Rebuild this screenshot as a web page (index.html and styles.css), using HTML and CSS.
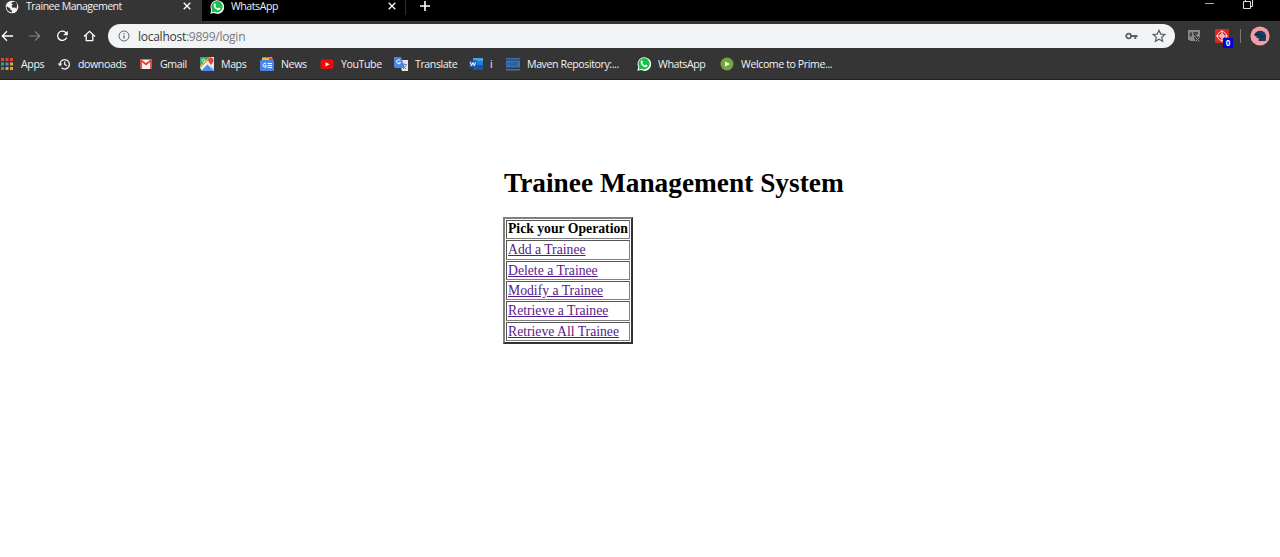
FILE: index.html
```html
<!DOCTYPE html>
<html lang="en">
<head>
<meta charset="utf-8">
<title>Trainee Management</title>
<link rel="stylesheet" href="styles.css">
</head>
<body>
<svg class="defs" width="0" height="0">
  <symbol id="whatsapp" viewBox="0 0 14 14">
    <path fill="#fff" d="M.3 13.8 1.3 10.2A6.8 6.8 0 1 1 4 13Z"/>
    <path fill="#18bf4b" d="M1.7 12.4 2.3 10A5.7 5.7 0 1 1 4.3 11.8Z"/>
    <path fill="#fff" d="M4.6 3.5c.8-.3 1 .2 1.3 1.4 0 .5-.7.8-.6 1.1.5 1.1 1.2 1.8 2.4 2.3.5.1.7-.8 1.1-.8l1.6.8c.3 1.4-1 2-2 1.9C5.7 9.8 3.600 7.100 3.700 5c0-.7.3-1.200.9-1.500Z"/>
  </symbol>
  <symbol id="close" viewBox="0 0 8 8"><path d="m.7.7 6.600 6.600m0-6.600L.7 7.300" stroke="#fff" stroke-width="1.300"/></symbol>
</svg>
<header class="browser">
  <div class="tabs">
    <div class="tab active">
      <svg class="favicon" viewBox="0 0 14 14"><circle cx="7" cy="7" r="6.300" fill="#f4f4f4"/><path fill="#353535" d="m1.500 6.300 3.800 2.200v1.600l1.700.5v2L4 11.600C2.200 10.300 1.300 8.500 1.500 6.300ZM7 2.200l3.500-.5 1.700 2.800-.7 4.300-1.300-1.200-2.700.2-1-2L8 4.500l-1.700-.9Z"/></svg>
      <span class="tab-title">Trainee Management</span>
      <svg class="close"><use href="#close"/></svg>
    </div>
    <div class="tab idle">
      <svg class="favicon"><use href="#whatsapp"/></svg>
      <span class="tab-title wa-title">WhatsApp</span>
      <svg class="close"><use href="#close"/></svg>
    </div>
    <svg class="plus" viewBox="0 0 10 10"><path d="M5 0v10M0 5h10" stroke="#fff" stroke-width="1.600"/></svg>
    <svg class="window" viewBox="0 0 50 14"><path d="M1 3.500h9" stroke="#aaa"/><path d="M39.500 1.500h7v7h-7zM41.500 1.500v-2h7v7h-2" fill="none" stroke="#ddd"/></svg>
  </div>
  <div class="toolbar">
    <svg class="nav" viewBox="0 0 98 16" fill="none" stroke="#fff" stroke-width="1.300">
      <path d="M13 8H2.500M7 3.300 2.300 8 7 12.700"/>
      <path d="M29 8h10.500M35 3.300 39.700 8 35 12.700" stroke="#858585" stroke-width="1.200"/>
      <path d="M66.300 5.200A4.700 4.700 0 1 0 66.700 9.500"/><path d="M67.800 2.700v4.600h-4.600Z" fill="#fff" stroke="none"/>
      <path d="m84 8.500 5.500-5.200L95 8.500M86.200 7v5.600h6.600V7"/>
    </svg>
    <div class="address">
      <svg class="info" viewBox="0 0 12 12" fill="none" stroke="#62666a"><circle cx="6" cy="6" r="5"/><path d="M6 5.300v3.500M6 3v1.300" stroke-width="1.200"/></svg>
      <span class="url"><b>localhost</b>:9899/login</span>
      <svg class="key" viewBox="0 0 13 8"><circle cx="3.600" cy="4" r="2.400" fill="none" stroke="#5d6165" stroke-width="1.800"/><path d="M6 4h6.500M10.300 4v3" fill="none" stroke="#5d6165" stroke-width="1.900"/></svg>
      <svg class="star" viewBox="0 0 14 14"><path fill="none" stroke="#5b5f64" stroke-width="1.200" d="m7 1.300 1.700 3.800 4.100.4-3.100 2.700.9 4.100L7 10.200l-3.600 2.100.9-4.100-3.100-2.700 4.100-.4Z"/></svg>
    </div>
    <svg class="ext" viewBox="0 0 14 14"><path fill="#8a8a8a" d="M1 1h12v6.500l-2 .8-2-1.500-2 2L8.500 12H3l-.5-1H1Z"/><path fill="#454545" d="M2.500 4 5 3v4.500H2.500zM6 3h5v2L7 7.500z"/><path d="m8.500 8.500 4 4m0-4-4 4" stroke="#999"/></svg>
    <div class="target">
      <svg viewBox="0 0 14 14"><rect width="14" height="14" rx="1" fill="#d82724"/><g fill="none" stroke="#ffd8d6"><circle cx="7" cy="7" r="4.500"/><circle cx="7" cy="7" r="2"/><path d="M7 1v12M1 7h12"/></g></svg>
      <span class="badge">0</span>
    </div>
    <span class="divider"></span>
    <svg class="avatar" viewBox="0 0 20 20"><circle cx="10" cy="10" r="9.600" fill="#f49ba3"/><path fill="#173d62" d="M4.200 9.500 5 7l3-2 4-.3 3 2 1.200 3.300-.5 5H8.500l.3-2.700-2-.3-.5-1.500Z"/><path d="m5 8.500 4.500-.3 1.500 2.200 3 .4" fill="none" stroke="#0d2643"/></svg>
  </div>
  <nav class="bookmarks">
    <a class="bm"><svg viewBox="0 0 14 14"><path fill="#e44134" d="M1 1h3v3H1zM5.500 1h3v3h-3zM10 1h3v3h-3z"/><path fill="#38a65a" d="M1 5.500h3v3H1z"/><path fill="#458bea" d="M5.500 5.500h3v3h-3z"/><path fill="#eba43b" d="M10 5.500h3v3h-3zM5.500 10h3v3h-3zM10 10h3v3h-3z"/><path fill="#38a65a" d="M1 10h3v3H1z"/></svg><span>Apps</span></a>
    <a class="bm"><svg viewBox="0 0 14 14" fill="none" stroke="#eee" stroke-width="1.300"><path d="M3 7.200a4.700 4.700 0 1 1 1.500 3.600M7.700 4.500v3l2.200 1.300"/><path fill="#eee" stroke="none" d="M.5 6.500h5L3 9.300Z"/></svg><span>downoads</span></a>
    <a class="bm"><svg viewBox="0 0 14 14"><rect x="1.500" y="2.500" width="11" height="9.500" fill="#f5f5f5"/><path fill="none" stroke="#e04438" stroke-width="1.800" d="M2 12V3.300l5 4 5-4V12"/></svg><span>Gmail</span></a>
    <a class="bm"><svg viewBox="0 0 14 14"><path fill="#35a866" d="M0 0h9L0 9Z"/><path fill="#eee" d="m0 11 11-11h3v14H2Z"/><path fill="#4b8bea" d="m7.500 7.500 6.500 6.500H1Z"/><path fill="#f4c940" d="m0 9 9-9h1.500L0 11Z"/><path fill="#df453a" d="M11 8C8.500 5 8 4 8.200 2.600 8.700.2 13 .2 13.500 2.700 13.700 4 13 5.500 11 8Z"/><path fill="#aaa" d="m10 8 4 4v2Z"/><circle cx="3.500" cy="3.500" r="1.500" fill="none" stroke="#fff" stroke-width=".8"/></svg><span>Maps</span></a>
    <a class="bm"><svg viewBox="0 0 14 14"><path fill="#34a260" d="M2 0h4v4H2z"/><path fill="#f5bb32" d="M2 1 12 0v4H2z"/><path fill="#df473b" d="M9 1h4v4H9z"/><rect y="3" width="14" height="11" rx="1" fill="#4a86e8"/><path d="M6 6.500a2 2 0 1 0 0 3.500V8.300H4.500M7.500 6.500H12M7.500 8.500H12M7.500 10.500H12" stroke="#fff" fill="none"/></svg><span>News</span></a>
    <a class="bm"><svg viewBox="0 0 14 14"><rect x=".5" y="2.500" width="13" height="9.500" rx="2" fill="#f00808"/><path d="m5.500 5.200 4 2.100-4 2.200Z" fill="#fff"/></svg><span>YouTube</span></a>
    <a class="bm"><svg viewBox="0 0 14 14"><path fill="#e3e6e8" d="M5 3h9v11H8Z"/><path fill="#4b86df" d="M0 0h7l4 11H1L0 10Z"/><path d="M6.300 3.500a2 2 0 1 0 .2 2.200H4.700" fill="none" stroke="#fff"/><path d="M8.500 7.500H13M10.500 6.500v1M12 8c-.5 2-1.500 3-3 4m0-3 3 3" fill="none" stroke="#597bab" stroke-width=".8"/></svg><span>Translate</span></a>
    <a class="bm"><svg viewBox="0 0 14 14"><path fill="#43a5e8" d="M4 1h10v4H4z"/><path fill="#2a7bd1" d="M4 4h10v4H4z"/><path fill="#1858aa" d="M4 8h10v5H4z"/><path fill="#1758b7" d="M0 3.500h8v7H0z"/><path d="m1.500 5 1 4L4 5.500 5.500 9l1-4" fill="none" stroke="#fff"/></svg><span>i</span></a>
    <a class="bm"><svg viewBox="0 0 14 14"><path fill="#3675b7" d="M0 1h14v1.500H0zM0 3.500h14v7H0zM0 12h14v1.500H0z"/><path d="M1.500 9V5.500L3 7l1.500-1.500V9M6 9V5.500h2V9M6 7.500h2M9.500 5v4m3-4-2.500 2L12.500 9" fill="none" stroke="#245489" stroke-width=".8"/></svg><span>Maven Repository:...</span></a>
    <a class="bm"><svg><use href="#whatsapp"/></svg><span>WhatsApp</span></a>
    <a class="bm"><svg viewBox="0 0 14 14"><circle cx="7" cy="7" r="6.500" fill="#74a63e"/><path fill="#fff" d="m5 4.500 5 2.500-5 2.500Z"/></svg><span>Welcome to Prime...</span></a>
  </nav>
</header>
<main class="page">
  <h1>Trainee Management System</h1>
  <table class="menu">
    <tr><th>Pick your Operation</th></tr>
    <tr><td><a href="#">Add a Trainee</a></td></tr>
    <tr><td><a href="#">Delete a Trainee</a></td></tr>
    <tr><td><a href="#">Modify a Trainee</a></td></tr>
    <tr><td><a href="#">Retrieve a Trainee</a></td></tr>
    <tr><td><a href="#">Retrieve All Trainee</a></td></tr>
  </table>
</main>
</body>
</html>
```
FILE: styles.css
```css
* { box-sizing: border-box; }
body { margin: 0; background: #fff; overflow: hidden; }
svg { display: block; flex: none; }
.defs { position: absolute; }
.browser { height: 80px; background: #353535; border-bottom: 1px solid #241f1f; font-family: "Open Sans", "Noto Sans", sans-serif; color: #f2f2f2; }
.tabs { display: flex; height: 21px; background: #000; }
.tab { display: flex; height: 21px; align-items: flex-start; }
.active { width: 202px; padding-left: 5px; background: #353535; }
.idle { width: 204px; padding-left: 8px; border-right: 1px solid #2e2e2e; height: 15px; }
.favicon { width: 14px; height: 14px; margin-right: 7px; }
.tab-title { width: 154px; font-size: 10.5px; line-height: 13px; letter-spacing: -.48px; white-space: nowrap; }
.wa-title { letter-spacing: -.4px; }
.close { width: 8px; height: 8px; margin: 2px 0 0 3px; }
.plus { width: 10px; height: 10px; margin: 1px 0 0 14px; }
.window { width: 50px; height: 14px; margin: 0 26px 0 auto; }
.toolbar { display: flex; align-items: center; height: 30px; }
.nav { width: 98px; height: 16px; }
.address { display: flex; flex: none; align-items: center; width: 1067px; height: 24px; margin-left: 10px; padding: 0 9px 0 10px; border-radius: 12px; background: #f1f3f4; }
.info { width: 12px; height: 12px; margin-right: 8px; }
.url { flex: 1; color: #777b7f; font-size: 12px; letter-spacing: -.26px; }
.url b { color: #37393c; font-weight: 400; }
.key { width: 13px; height: 8px; margin-right: 14px; }
.star { width: 14px; height: 14px; }
.ext { width: 14px; height: 14px; margin-left: 12px; }
.target { position: relative; width: 14px; height: 14px; margin-left: 14px; }
.target svg { width: 14px; height: 14px; }
.badge { position: absolute; left: 8px; top: 9px; width: 10px; height: 10px; border-radius: 1px; background: #0000da; color: #fff; font: bold 8px/10px "Open Sans", sans-serif; text-align: center; }
.divider { width: 1px; height: 14px; margin: 0 9px 0 11px; background: #777; }
.avatar { width: 20px; height: 20px; }
.bookmarks { display: grid; grid-template-columns: 57px 82px 61px 60px 60px 74px 75px 37px 131px 83px 120px; height: 25px; align-items: center; font-size: 10.6px; letter-spacing: -.4px; }
.bm { display: flex; gap: 7px; align-items: center; white-space: nowrap; }
.bm svg { width: 14px; height: 14px; }
.page { padding: 86px 0 0 503px; font-family: "Liberation Serif", serif; }
h1 { margin: 0 0 19px 1px; font-size: 27.35px; line-height: 34px; height: 32px; color: #000; white-space: nowrap; }
.menu { width: 130px; height: 127px; border: 2px solid; border-color: #808080 #333 #333 #808080; border-spacing: 1px; font-size: 13.7px; line-height: 16px; white-space: nowrap; }
th, td { padding: 0 0 0 1px; border: 1px solid; border-color: #555 #808080 #808080 #555; text-align: left; }
th { padding-bottom: 1px; }
td { padding-top: 1px; }
.menu a { color: #551a8b; }
```
